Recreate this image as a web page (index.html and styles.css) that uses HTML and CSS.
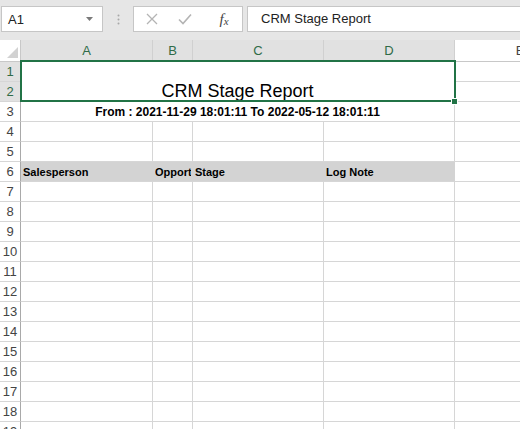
FILE: index.html
```html
<!DOCTYPE html>
<html>
<head>
<meta charset="utf-8">
<link rel="stylesheet" href="styles.css">
</head>
<body>
<div class="app">
  <div class="toolbar">
    <div class="namebox">
      <span class="nb-text">A1</span>
      <svg class="nb-arrow" width="8" height="5" viewBox="0 0 8 5"><path d="M0 0 H7 L3.5 4 Z" fill="#7a7a7a"/></svg>
    </div>
    <div class="dots">
      <svg width="3" height="11" viewBox="0 0 3 11"><circle cx="1.5" cy="1.5" r="1" fill="#a8a8a8"/><circle cx="1.5" cy="5.5" r="1" fill="#a8a8a8"/><circle cx="1.5" cy="9.5" r="1" fill="#a8a8a8"/></svg>
    </div>
    <div class="fbtns">
      <span class="fb fb-x"><svg width="12" height="12" viewBox="0 0 12 12"><path d="M1 1 L11 11 M11 1 L1 11" stroke="#b4b4b4" stroke-width="1.3" fill="none"/></svg></span>
      <span class="fb fb-ok"><svg width="14" height="12" viewBox="0 0 14 12"><path d="M1 6.5 L5 10.5 L13 1.5" stroke="#b4b4b4" stroke-width="1.6" fill="none"/></svg></span>
      <span class="fb fb-fx"><i>f</i><i class="x">x</i></span>
    </div>
    <div class="formula">CRM Stage Report</div>
  </div>
  <div class="sheet">
    <div class="grid">
      <div class="corner"><svg width="11" height="11" viewBox="0 0 11 11"><path d="M11 0 V11 H0 Z" fill="#d2d2d2"/></svg></div>
      <div class="ch sel">A</div>
      <div class="ch sel">B</div>
      <div class="ch sel">C</div>
      <div class="ch sel">D</div>
      <div class="ch">E</div>

      <div class="rh sel">1</div>
      <div class="c title">CRM Stage Report</div>
      <div class="c"></div>
      <div class="rh sel">2</div>
      <div class="c"></div>

      <div class="rh">3</div>
      <div class="c range">From : 2021-11-29 18:01:11 To 2022-05-12 18:01:11</div>
      <div class="c"></div>

      <div class="rh">4</div><div class="c"></div><div class="c"></div><div class="c"></div><div class="c"></div><div class="c"></div>
      <div class="rh">5</div><div class="c"></div><div class="c"></div><div class="c"></div><div class="c"></div><div class="c"></div>
      <div class="rh">6</div><div class="c hd">Salesperson</div><div class="c hd"><span class="clip">Opportunity</span></div><div class="c hd">Stage</div><div class="c hd">Log Note</div><div class="c"></div>
      <div class="rh">7</div><div class="c"></div><div class="c"></div><div class="c"></div><div class="c"></div><div class="c"></div>
      <div class="rh">8</div><div class="c"></div><div class="c"></div><div class="c"></div><div class="c"></div><div class="c"></div>
      <div class="rh">9</div><div class="c"></div><div class="c"></div><div class="c"></div><div class="c"></div><div class="c"></div>
      <div class="rh">10</div><div class="c"></div><div class="c"></div><div class="c"></div><div class="c"></div><div class="c"></div>
      <div class="rh">11</div><div class="c"></div><div class="c"></div><div class="c"></div><div class="c"></div><div class="c"></div>
      <div class="rh">12</div><div class="c"></div><div class="c"></div><div class="c"></div><div class="c"></div><div class="c"></div>
      <div class="rh">13</div><div class="c"></div><div class="c"></div><div class="c"></div><div class="c"></div><div class="c"></div>
      <div class="rh">14</div><div class="c"></div><div class="c"></div><div class="c"></div><div class="c"></div><div class="c"></div>
      <div class="rh">15</div><div class="c"></div><div class="c"></div><div class="c"></div><div class="c"></div><div class="c"></div>
      <div class="rh">16</div><div class="c"></div><div class="c"></div><div class="c"></div><div class="c"></div><div class="c"></div>
      <div class="rh">17</div><div class="c"></div><div class="c"></div><div class="c"></div><div class="c"></div><div class="c"></div>
      <div class="rh">18</div><div class="c"></div><div class="c"></div><div class="c"></div><div class="c"></div><div class="c"></div>
      <div class="rh">19</div><div class="c"></div><div class="c"></div><div class="c"></div><div class="c"></div><div class="c"></div>
    </div>
    <div class="selection"></div>
    <div class="handle"></div>
  </div>
</div>
</body>
</html>
```

FILE: styles.css
```css
* { box-sizing: border-box; }
html, body { margin: 0; padding: 0; }
body {
  width: 520px;
  height: 429px;
  overflow: hidden;
  background: #ffffff;
  font-family: "Liberation Sans", Arial, sans-serif;
  color: #000;
}
.app { width: 520px; height: 429px; overflow: hidden; display: flex; flex-direction: column; }

/* toolbar */
.toolbar {
  height: 40px;
  flex: none;
  background: #e6e6e6;
  display: flex;
  align-items: flex-start;
  padding: 6px 0 0 1px;
}
.namebox {
  width: 102px;
  height: 26px;
  background: #fff;
  border: 1px solid #c6c6c6;
  display: flex;
  align-items: center;
  justify-content: space-between;
  padding: 0 6px 0 6px;
  font-size: 13px;
  color: #222;
}
.nb-arrow { margin-right: 2px; margin-top: 1px; }
.dots {
  width: 30px;
  height: 26px;
  display: flex;
  align-items: center;
  justify-content: center;
}
.fbtns {
  width: 110px;
  height: 26px;
  background: #fff;
  border: 1px solid #c6c6c6;
  display: flex;
  align-items: center;
  padding-left: 8px;
}
.fb { width: 20px; display: flex; justify-content: center; align-items: center; }
.fb-ok { margin-left: 13px; }
.fb-fx {
  margin-left: 19px;
  font-family: "Liberation Serif", "Times New Roman", serif;
  font-size: 15px;
  color: #444;
}
.fb-fx .x { font-size: 11px; margin-top: 4px; }
.formula {
  flex: 1;
  margin-left: 4px;
  height: 26px;
  background: #fff;
  border: 1px solid #c6c6c6;
  border-right: none;
  padding-left: 13px;
  font-size: 13px;
  line-height: 24px;
  color: #222;
}

/* sheet */
.sheet { position: relative; flex: 1; overflow: hidden; }
.grid {
  display: grid;
  grid-template-columns: 21px 132px 40px 131px 131px 131px;
  grid-template-rows: 22px;
  grid-auto-rows: 20px;
  width: 586px;
}
.corner {
  background: #fff;
  border-right: 1px solid #c8c8c8;
  border-bottom: 1px solid #c8c8c8;
  display: flex;
  align-items: flex-end;
  justify-content: flex-end;
  padding: 0 2px 3px 0;
}
.ch {
  background: #fff;
  border-right: 1px solid #d0d0d0;
  border-bottom: 1px solid #c8c8c8;
  font-size: 13px;
  color: #444;
  display: flex;
  align-items: center;
  justify-content: center;
  padding-bottom: 1px;
}
.ch.sel { background: #e1e1e1; color: #2f6b47; }
.rh {
  background: #fff;
  border-right: 1px solid #a9a9a9;
  border-bottom: 1px solid #d6d6d6;
  font-size: 13px;
  color: #444;
  display: flex;
  align-items: center;
  justify-content: center;
}
.rh.sel { background: #e1e1e1; color: #2f6b47; }
.c {
  border-right: 1px solid #d6d6d6;
  border-bottom: 1px solid #d6d6d6;
  font-size: 11px;
  white-space: nowrap;
  overflow: hidden;
}
.title {
  grid-column: 2 / 6;
  grid-row: 2 / 4;
  display: flex;
  align-items: flex-end;
  justify-content: center;
  font-size: 18px;
  line-height: 20px;
  padding-bottom: 0;
  border-right: 1px solid #d6d6d6;
}
.range {
  grid-column: 2 / 6;
  display: flex;
  align-items: center;
  justify-content: center;
  font-weight: bold;
  font-size: 12px;
}
.hd {
  background: #d3d3d3;
  border-right-color: #d3d3d3;
  font-weight: bold;
  padding-left: 2px;
  display: flex;
  align-items: center;
  padding-top: 1px;
}
.clip {
  display: block;
  max-width: 36px;
  overflow: hidden;
}

/* selection overlay */
.selection {
  position: absolute;
  left: 20px;
  top: 20px;
  width: 436px;
  height: 42px;
  border: 2px solid #217346;
  pointer-events: none;
}
.handle {
  position: absolute;
  left: 451px;
  top: 58px;
  width: 7px;
  height: 7px;
  background: #217346;
  border: 1px solid #fff;
}
```
